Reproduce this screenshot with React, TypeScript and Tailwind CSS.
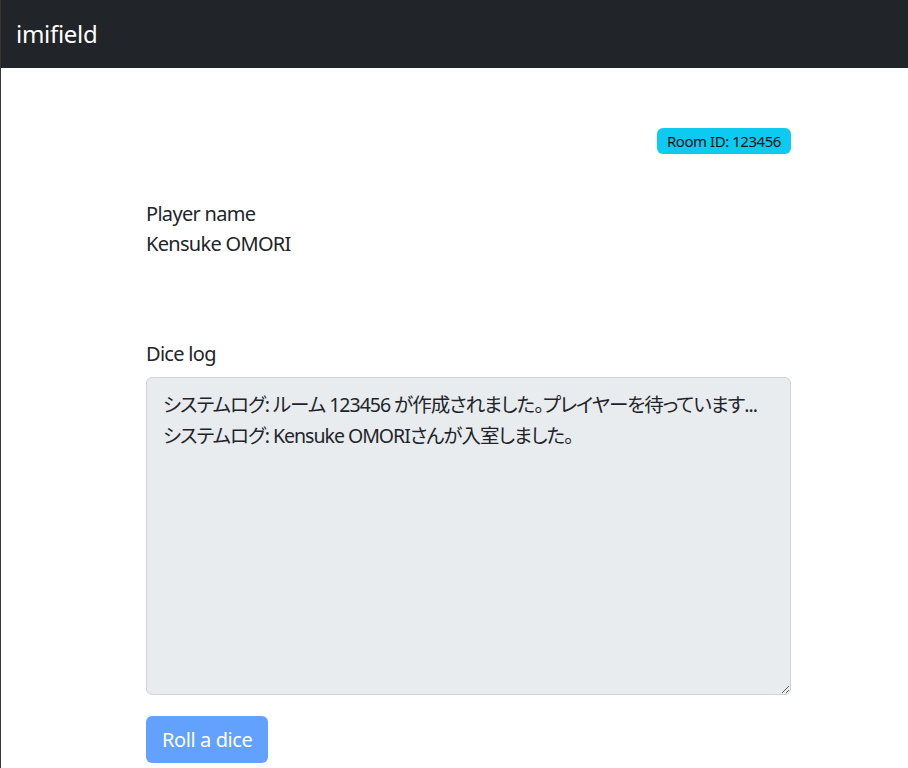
export default function App() {
  const log =
    'システムログ: ルーム 123456 が作成されました。プレイヤーを待っています...\nシステムログ: Kensuke OMORIさんが入室しました。';

  return (
    <div
      className="min-h-[768px] bg-white border-l border-[#3a3530] text-[#212529] [font-feature-settings:'palt']"
      style={{ fontFamily: '"Noto Sans", "Noto Sans CJK JP", sans-serif' }}
    >
      <nav className="h-[68px] bg-[#212529] flex items-center pl-[15px]">
        <span className="text-[24px] text-white leading-none tracking-[-0.3px]">imifield</span>
      </nav>

      <main className="pl-[145px] pt-[60px]">
        <div className="w-[645px]">
          <div className="flex justify-end">
            <span className="bg-[#0dcaf0] text-[#111] text-[15px] leading-none tracking-[-0.45px] px-[10px] py-[5.5px] rounded-[6px]">
              Room ID: 123456
            </span>
          </div>

          <div className="mt-[45px] text-[20px] leading-[30px] tracking-[-0.7px]">
            <div>Player name</div>
            <div>Kensuke OMORI</div>
          </div>

          <div className="mt-[80px]">
            <label className="block text-[20px] leading-[30px] tracking-[-0.7px] mb-[8px]">Dice log</label>
            <textarea
              readOnly
              wrap="off"
              value={log}
              className="block w-full h-[318px] bg-[#e9ecef] border border-[#ced4da] rounded-[6px] px-4 pt-[11px] pb-2 text-[19.5px] leading-[31px] tracking-[-1px] text-[#212529] outline-none resize-y overflow-hidden [font-feature-settings:'palt']"
              style={{ fontFamily: '"Noto Sans", "Noto Sans CJK JP", sans-serif' }}
            />
          </div>

          <button
            disabled
            className="mt-[21px] h-[47px] px-4 bg-[#62a1fe] text-white text-[20px] leading-[30px] tracking-[-0.4px] rounded-[6px]"
          >
            Roll a dice
          </button>
        </div>
      </main>
    </div>
  );
}
